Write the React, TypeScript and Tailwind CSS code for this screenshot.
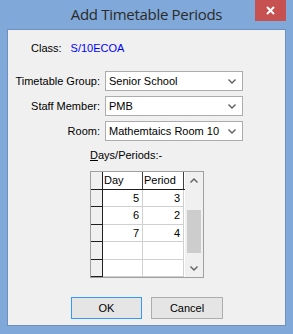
import React from 'react';

function Chevron({ up = false }: { up?: boolean }) {
  return (
    <svg width="8" height="5" viewBox="0 0 8 5" className={up ? 'rotate-180' : ''}>
      <path d="M0.5 0.5 L4 4 L7.5 0.5" fill="none" stroke="#606060" strokeWidth="1.4" />
    </svg>
  );
}

function Combo({ value }: { value: string }) {
  return (
    <div className="h-[20px] w-[138px] bg-white border border-[#acacac] flex items-center justify-between pl-[3px] pr-[6px]">
      <span className="text-[11px] text-black leading-none whitespace-nowrap">{value}</span>
      <Chevron />
    </div>
  );
}

const rows = [
  { day: '5', period: '3' },
  { day: '6', period: '2' },
  { day: '7', period: '4' },
  { day: '', period: '' },
  { day: '', period: '' },
];

export default function App() {
  return (
    <div className="w-[293px] h-[334px] bg-[#80a8d8] flex flex-col px-[7px] pb-[8px] font-['Liberation_Sans',Arial,sans-serif] relative">
      <div className="h-[29px] flex items-center justify-center">
        <span className="text-[15px] text-[#2b2b2b] font-['Open_Sans',sans-serif] tracking-[-0.3px]">Add Timetable Periods</span>
      </div>
      <div className="absolute right-[7px] top-0 w-[31px] h-[21px] bg-[#c75050] flex items-center justify-center">
        <svg width="9" height="9" viewBox="0 0 9 9">
          <path d="M1 1 L8 8 M8 1 L1 8" stroke="white" strokeWidth="2" />
        </svg>
      </div>

      <div className="flex-1 bg-[#f0f0f0] border border-[#6d90c0] flex flex-col text-[11px] text-black whitespace-nowrap">
        <div className="flex items-center gap-[9px] pl-[23px] pt-[11px] h-[26px]">
          <span>Class:</span>
          <span className="text-[#0000ff]">S/10ECOA</span>
        </div>

        <div className="grid grid-cols-[92px_138px] gap-x-[5px] gap-y-[5px] mt-[15px] items-center">
          <span className="text-right">Timetable Group:</span>
          <Combo value="Senior School" />
          <span className="text-right">Staff Member:</span>
          <Combo value="PMB" />
          <span className="text-right">Room:</span>
          <Combo value="Mathemtaics Room 10" />
        </div>

        <div className="pl-[82px] mt-[7px] h-[14px] leading-[14px]">
          <span className="underline">D</span>ays/Periods:-
        </div>

        <div className="ml-[82px] mt-[9px] w-[114px] h-[107px] border border-[#a0a0a0] bg-white flex">
          <div className="flex-1 flex flex-col">
            <div className="flex h-[19px] border-b border-[#202020]">
              <div className="w-[12px] bg-[#f0f0f0] border-r border-[#202020]" />
              <div className="w-[40px] border-r border-[#404040] pl-[1px] flex items-center">Day</div>
              <div className="w-[41px] border-r border-[#404040] pl-[1px] flex items-center">Period</div>
            </div>
            {rows.map((r, i) => (
              <div key={i} className="flex h-[19px]">
                <div className="w-[12px] bg-[#f0f0f0] border-r border-b border-[#202020]" />
                <div className="w-[40px] border-r border-b border-[#d0d0d0] pr-[3px] flex items-center justify-end">{r.day}</div>
                <div className="w-[41px] border-r border-b border-[#d0d0d0] pr-[3px] flex items-center justify-end">{r.period}</div>
              </div>
            ))}
            <div className="flex flex-1">
              <div className="w-[12px] bg-[#f0f0f0] border-r border-[#202020]" />
            </div>
          </div>
          <div className="w-[18px] bg-[#f0f0f0] flex flex-col items-center">
            <div className="h-[17px] flex items-center justify-center">
              <Chevron up />
            </div>
            <div className="h-[21px]" />
            <div className="w-[14px] h-[43px] bg-[#cdcdcd]" />
            <div className="flex-1" />
            <div className="h-[17px] flex items-center justify-center">
              <Chevron />
            </div>
          </div>
        </div>

        <div className="flex gap-[9px] pl-[63px] mt-[19px]">
          <button className="w-[71px] h-[22px] bg-[#e5e5e5] border border-[#3399ff]">OK</button>
          <button className="w-[72px] h-[22px] bg-[#e5e5e5] border border-[#adadad]">Cancel</button>
        </div>
      </div>
    </div>
  );
}
